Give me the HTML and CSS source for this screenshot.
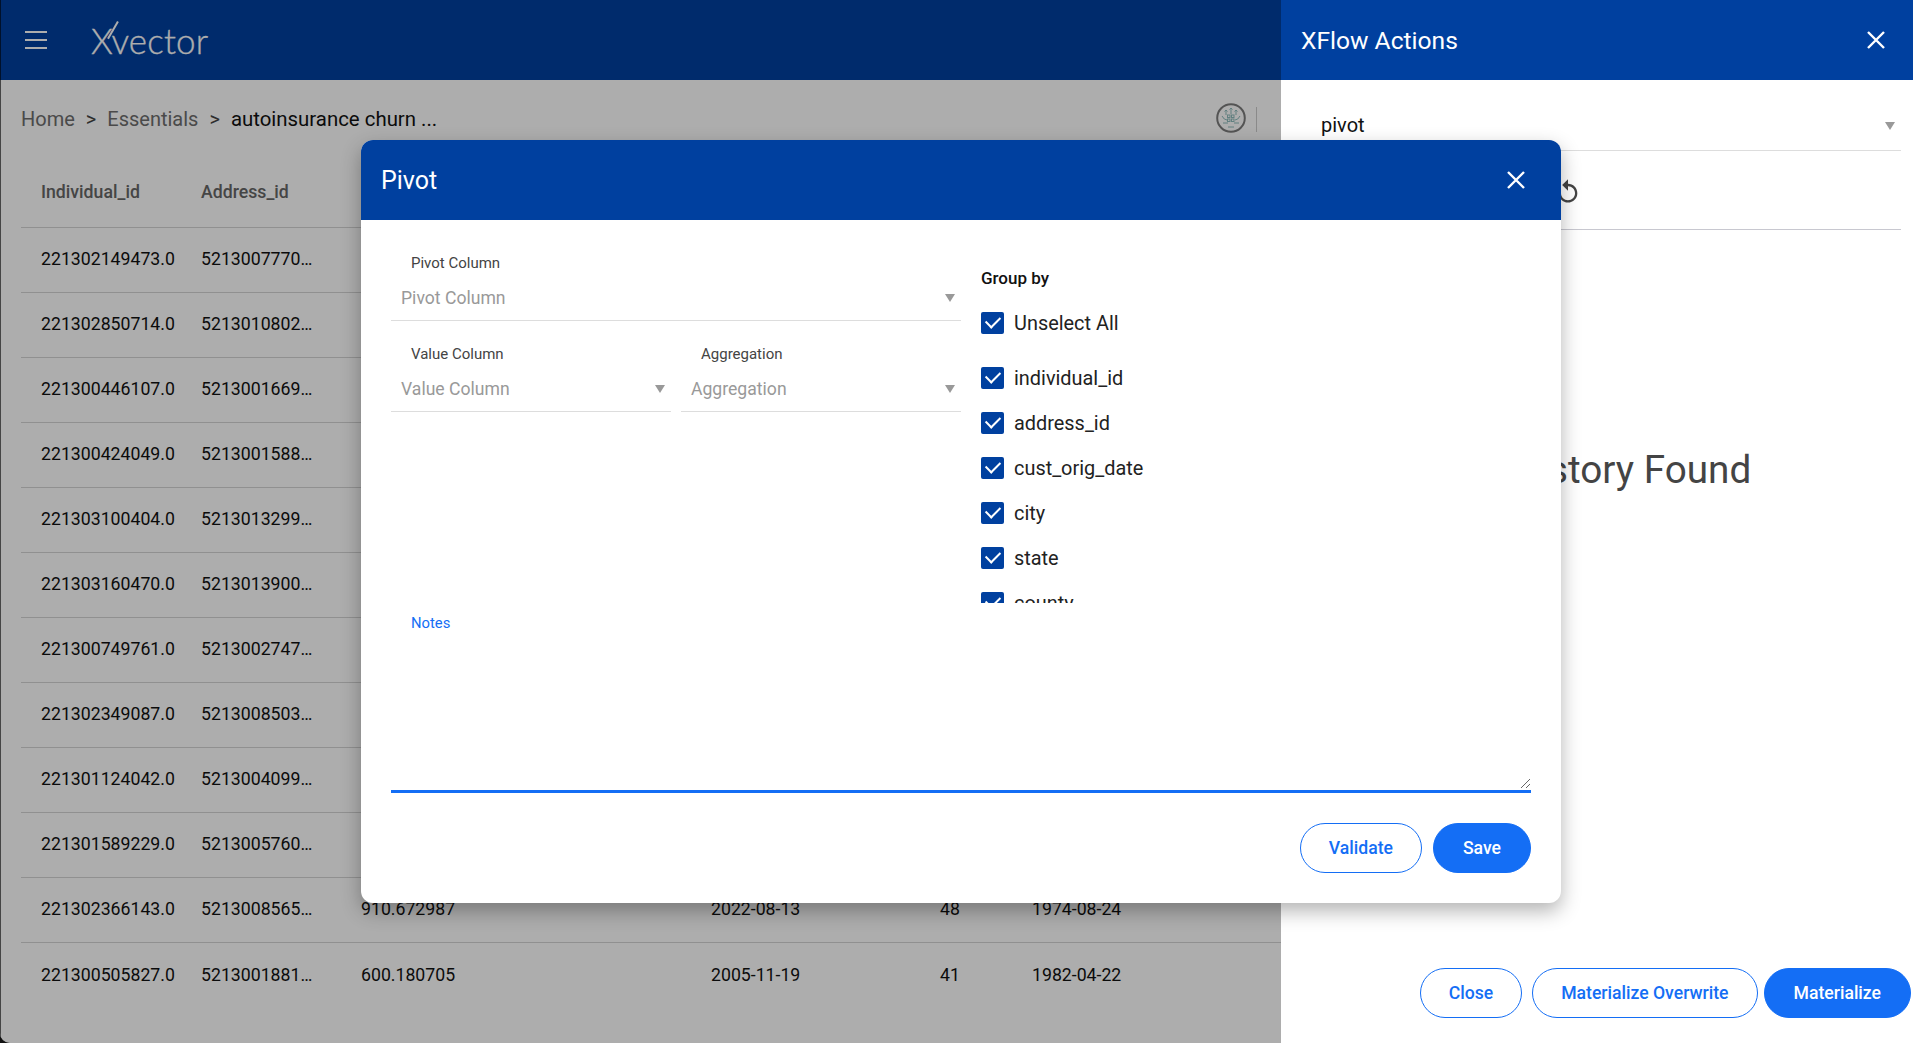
FILE: index.html
```html
<!DOCTYPE html>
<html lang="en">

<head>
    <meta charset="UTF-8">
    <meta name="viewport" content="width=device-width, initial-scale=1.0">
    <title>Xvector - Pivot</title>
    <link rel="stylesheet" href="styles.css">
</head>

<body>
    <div class="app">
        <div class="main">
            <header class="topbar">
                <div class="burger"><span></span><span></span><span></span></div>
                <div class="logo">Xvector</div>
            </header>
            <div class="crumbrow">
                <div class="crumbs">
                    <span class="crumb-link">Home</span>
                    <span class="crumb-sep">&gt;</span>
                    <span class="crumb-link">Essentials</span>
                    <span class="crumb-sep">&gt;</span>
                    <span class="crumb-current">autoinsurance churn ...</span>
                </div>
                <svg class="status-icon" width="30" height="30" viewBox="0 0 30 30">
                    <circle cx="15" cy="15" r="13.8" fill="#fff" stroke="#7d7d7d" stroke-width="2"/>
                    <g fill="none" stroke="#8fbdbd" stroke-width="1">
                        <path d="M15 5v6M10 7v5M20 7v5M13.500 6.500L15 5l1.500 1.500M8.500 8.500L10 7l1.500 1.500M18.500 8.500L20 7l1.500 1.500"/>
                        <path d="M6 13q2 4 5 4M24 13q-2 4-5 4"/>
                        <rect x="11.500" y="12" width="2.500" height="2.500"/>
                        <rect x="15.500" y="12" width="2.500" height="2.500"/>
                        <rect x="11.500" y="16" width="2.500" height="2.500"/>
                        <rect x="15.500" y="16" width="2.500" height="2.500"/>
                        <path d="M7 20h5M18 20h5M12 24h6"/>
                    </g>
                </svg>
                <div class="crumb-divider"></div>
            </div>
            <div class="table">
                <div class="row head"><div>Individual_id</div><div>Address_id</div></div>
                <div class="row"><div>221302149473.0</div><div>5213007770…</div></div>
                <div class="row"><div>221302850714.0</div><div>5213010802…</div></div>
                <div class="row"><div>221300446107.0</div><div>5213001669…</div></div>
                <div class="row"><div>221300424049.0</div><div>5213001588…</div></div>
                <div class="row"><div>221303100404.0</div><div>5213013299…</div></div>
                <div class="row"><div>221303160470.0</div><div>5213013900…</div></div>
                <div class="row"><div>221300749761.0</div><div>5213002747…</div></div>
                <div class="row"><div>221302349087.0</div><div>5213008503…</div></div>
                <div class="row"><div>221301124042.0</div><div>5213004099…</div></div>
                <div class="row"><div>221301589229.0</div><div>5213005760…</div></div>
                <div class="row"><div>221302366143.0</div><div>5213008565…</div><div>910.672987</div><div>2022-08-13</div><div>48</div><div>1974-08-24</div></div>
                <div class="row last"><div>221300505827.0</div><div>5213001881…</div><div>600.180705</div><div>2005-11-19</div><div>41</div><div>1982-04-22</div></div>
            </div>
            <div class="dim"></div>
        </div>

        <aside class="drawer">
            <div class="drawer-head">
                <span>XFlow Actions</span>
                <svg class="close" width="20" height="20" viewBox="0 0 20 20"><path d="M2 2l16 16M18 2L2 18"/></svg>
            </div>
            <div class="drawer-select">
                <span>pivot</span>
                <i class="caret"></i>
            </div>
            <div class="drawer-tools">
                <svg class="undo" width="28" height="28" viewBox="0 0 24 24"><path d="M12 5V1L7 6l5 5V7c3.310 0 6 2.690 6 6s-2.690 6-6 6-6-2.690-6-6H4c0 4.420 3.580 8 8 8s8-3.580 8-8-3.580-8-8-8z"/></svg>
            </div>
            <div class="drawer-empty">No History Found</div>
            <div class="drawer-actions">
                <button class="btn outline">Close</button>
                <button class="btn outline">Materialize Overwrite</button>
                <button class="btn solid">Materialize</button>
            </div>
        </aside>

        <section class="modal">
            <div class="modal-head">
                <span>Pivot</span>
                <svg class="close" width="20" height="20" viewBox="0 0 20 20"><path d="M2 2l16 16M18 2L2 18"/></svg>
            </div>
            <div class="modal-body">
                <div class="modal-cols">
                    <div class="fields">
                        <div class="field">
                            <label>Pivot Column</label>
                            <div class="picker"><span>Pivot Column</span><i class="caret"></i></div>
                        </div>
                        <div class="field-pair">
                            <div class="field">
                                <label>Value Column</label>
                                <div class="picker"><span>Value Column</span><i class="caret"></i></div>
                            </div>
                            <div class="field">
                                <label>Aggregation</label>
                                <div class="picker"><span>Aggregation</span><i class="caret"></i></div>
                            </div>
                        </div>
                    </div>
                    <div class="groupby">
                        <h4>Group by</h4>
                        <div class="check all"><b class="box"></b>Unselect All</div>
                        <div class="checklist">
                            <div class="check"><b class="box"></b>individual_id</div>
                            <div class="check"><b class="box"></b>address_id</div>
                            <div class="check"><b class="box"></b>cust_orig_date</div>
                            <div class="check"><b class="box"></b>city</div>
                            <div class="check"><b class="box"></b>state</div>
                            <div class="check"><b class="box"></b>county</div>
                        </div>
                    </div>
                </div>
                <div class="notes">
                    <label>Notes</label>
                    <div class="notes-area"><svg class="grip" width="9" height="9" viewBox="0 0 9 9"><path d="M0 9L9 0M5 9l4-4"/></svg></div>
                </div>
                <div class="modal-actions">
                    <button class="btn outline">Validate</button>
                    <button class="btn solid">Save</button>
                </div>
            </div>
        </section>
    </div>
</body>

</html>
```

FILE: styles.css
```css
* {
    box-sizing: border-box;
}

html,
body {
    margin: 0;
    padding: 0;
    height: 100%;
    overflow: hidden;
    font-family: Roboto, sans-serif;
    background-color: #fff;
}

.app {
    display: flex;
    height: 1043px;
    position: relative;
    background-color: #111;
}

/* left side, sits under the grey backdrop */
.main {
    width: 1281px;
    position: relative;
    background-color: #fff;
    overflow: hidden;
    border-bottom-left-radius: 10px;
}

.dim {
    position: absolute;
    inset: 0;
    background-color: rgba(0, 0, 0, 0.32);
    box-shadow: inset 1px 0 0 rgba(0, 0, 0, 0.6);
}

.topbar {
    height: 80px;
    background-color: #00409f;
    display: flex;
    align-items: center;
    padding-left: 25px;
}

.burger {
    width: 22px;
    display: flex;
    flex-direction: column;
    gap: 6px;
}

.burger span {
    height: 2px;
    background-color: #fff;
}

.logo {
    margin-left: 44px;
    font-family: Lato, sans-serif;
    font-weight: 300;
    font-size: 35px;
    color: #fff;
    position: relative;
    letter-spacing: 0.2px;
    -webkit-text-stroke: 0.3px #fff;
}

.logo::after {
    content: "";
    position: absolute;
    left: 21px;
    top: 1px;
    width: 1.5px;
    height: 20px;
    background-color: #fff;
    transform: rotate(30deg);
}

.crumbrow {
    height: 78px;
    padding-left: 21px;
    display: flex;
    align-items: center;
    font-size: 20px;
}

.crumbs {
    flex: 1;
    display: flex;
    gap: 11px;
}

.crumb-link {
    color: #6e6e6e;
}

.crumb-sep {
    color: #444;
}

.crumb-current {
    color: #111;
    font-size: 20.4px;
}

.status-icon {
    margin-right: 10px;
    margin-bottom: 2px;
}

.crumb-divider {
    width: 1px;
    height: 25px;
    background-color: #ccc;
    margin-right: 24px;
}

.table {
    margin-left: 21px;
    font-size: 17.7px;
    color: #111;
}

.row {
    display: grid;
    grid-template-columns: 160px 160px 350px 229px 92px 200px;
    height: 65px;
    align-items: center;
    padding-left: 20px;
    padding-bottom: 2px;
    border-bottom: 1px solid #d5d5d5;
}

.row.head {
    height: 70px;
    color: #666;
    font-weight: 500;
    padding-bottom: 1px;
}

.row.last {
    border-bottom: 0;
}

/* right panel */
.drawer {
    flex: 1;
    background-color: #fff;
    position: relative;
}

.drawer-head,
.modal-head {
    height: 80px;
    background-color: #00409f;
    color: #fff;
    display: flex;
    align-items: center;
    justify-content: space-between;
    font-size: 25px;
}

.drawer-head {
    padding: 0 27px 0 20px;
    font-size: 24.6px;
}

.close path {
    stroke: #fff;
    stroke-width: 2.4;
    fill: none;
}

.drawer-select {
    margin: 0 12px 0 19px;
    height: 71px;
    padding: 20px 6px 0 21px;
    display: flex;
    align-items: center;
    justify-content: space-between;
    border-bottom: 1px solid #ddd;
    font-size: 20px;
    color: #111;
}

.caret {
    width: 0;
    height: 0;
    margin-top: 1px;
    border-left: 5px solid transparent;
    border-right: 5px solid transparent;
    border-top: 8px solid #999;
}

.drawer-tools {
    margin: 0 12px 0 19px;
    height: 79px;
    border-bottom: 1px solid #c8c8d0;
    display: flex;
    align-items: center;
    padding-left: 254px;
}

.undo {
    margin-top: 4px;
}

.undo path {
    fill: #444;
}

.drawer-empty {
    margin-top: 217px;
    padding-left: 9px;
    text-align: center;
    font-size: 38.7px;
    font-weight: 400;
    color: #444;
}

.drawer-actions {
    position: absolute;
    right: 2px;
    bottom: 25px;
    display: flex;
    gap: 10px;
}

.drawer-actions .solid {
    margin-left: -4px;
}

.btn {
    height: 50px;
    border-radius: 25px;
    font-family: Roboto, sans-serif;
    font-size: 17.6px;
    font-weight: 500;
    padding: 0 29px;
    background-color: #fff;
    color: #146ef5;
    border: 1px solid #146ef5;
}

.btn.outline {
    padding: 0 28px;
}

.btn.solid {
    background-color: #146ef5;
    color: #fff;
}

/* pivot dialog */
.modal {
    position: absolute;
    left: 361px;
    top: 140px;
    width: 1200px;
    height: 763px;
    background-color: #fff;
    border-radius: 12px;
    box-shadow: 0 8px 20px rgba(0, 0, 0, 0.3);
    overflow: hidden;
}

.modal-head {
    padding: 0 35px 0 20px;
}

.modal-body {
    padding: 0 30px;
}

.modal-cols {
    display: flex;
    gap: 20px;
    height: 394px;
}

.fields {
    width: 570px;
    padding-top: 34px;
}

.field label {
    display: block;
    padding-left: 20px;
    font-size: 15px;
    color: #444;
    height: 21px;
}

.picker {
    height: 46px;
    padding: 0 6px 0 10px;
    display: flex;
    align-items: center;
    justify-content: space-between;
    border-bottom: 1px solid #ddd;
    font-size: 17.6px;
    color: #999;
}

.field-pair {
    display: grid;
    grid-template-columns: 1fr 1fr;
    gap: 10px;
    margin-top: 24px;
}

.groupby {
    flex: 1;
    padding-top: 47px;
}

.groupby h4 {
    margin: 0 0 23px;
    font-size: 17px;
    font-weight: 500;
    color: #111;
    line-height: 22px;
}

.check {
    display: flex;
    align-items: center;
    height: 22px;
    gap: 10px;
    font-size: 19.9px;
    color: #222;
}

.check.all {
    margin-bottom: 33px;
}

.checklist {
    display: flex;
    flex-direction: column;
    gap: 23px;
    height: 236px;
    overflow: hidden;
}

.box {
    width: 23px;
    height: 22px;
    border-radius: 2px;
    background-color: #00409f;
    flex-shrink: 0;
    position: relative;
}

.box::after {
    content: "";
    position: absolute;
    left: 5px;
    top: 4px;
    width: 12px;
    height: 7px;
    border-left: 2.5px solid #fff;
    border-bottom: 2.5px solid #fff;
    transform: rotate(-45deg);
}

.notes label {
    display: block;
    padding-left: 20px;
    font-size: 14.8px;
    color: #146ef5;
    height: 20px;
}

.notes-area {
    height: 159px;
    border-bottom: 3px solid #146ef5;
    position: relative;
}

.grip {
    position: absolute;
    right: 1px;
    bottom: 2px;
}

.grip path {
    stroke: #666;
    stroke-width: 1;
    fill: none;
}

.modal-actions {
    display: flex;
    justify-content: flex-end;
    gap: 11px;
    margin-top: 30px;
}
```
